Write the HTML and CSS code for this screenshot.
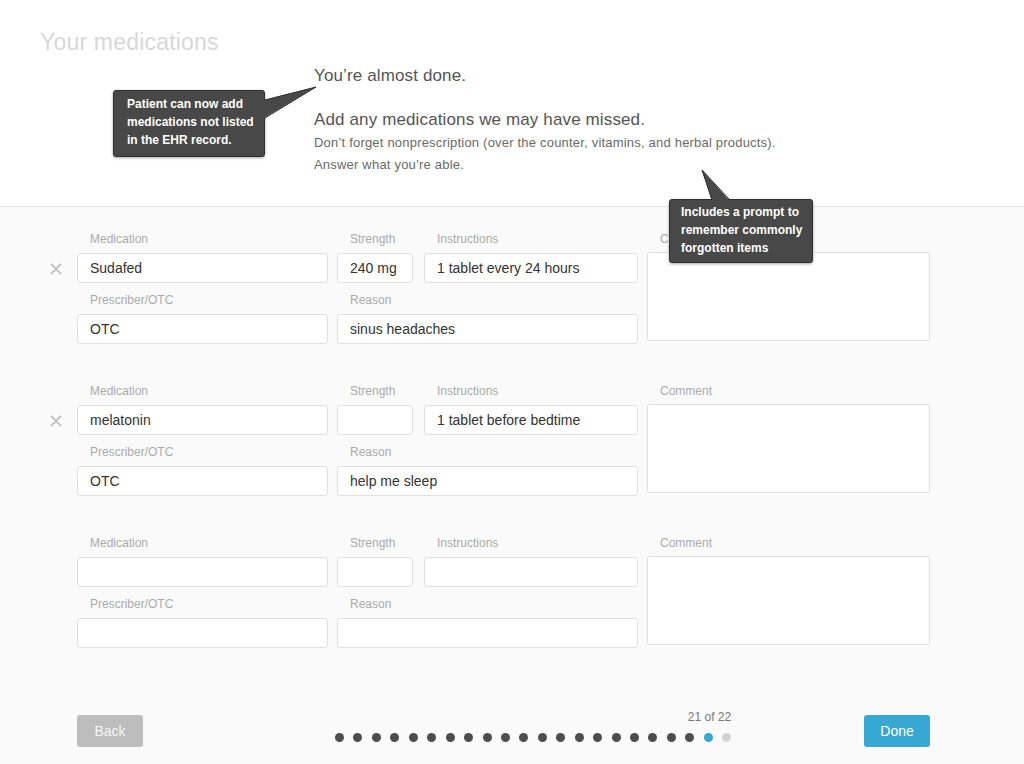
FILE: index.html
```html
<!DOCTYPE html>
<html lang="en">
<head>
  <meta charset="UTF-8" />
  <meta name="viewport" content="width=device-width, initial-scale=1.0" />
  <title>Your medications</title>
  <link rel="stylesheet" href="styles.css">
</head>
<body>
  <div class="page">

    <!-- Cabecera con título e introducción -->
    <header class="intro">
      <h1 class="title">Your medications</h1>
      <div class="intro-text">
        <p class="lead">You’re almost done.</p>
        <p class="lead lead-second">Add any medications we may have missed.</p>
        <p class="sub">Don’t forget nonprescription (over the counter, vitamins, and herbal products).</p>
        <p class="sub">Answer what you’re able.</p>
      </div>
    </header>

    <!-- Formulario de medicaciones -->
    <main class="meds">
      <div class="entry">
        <span class="remove">
          <svg width="12" height="12" viewBox="0 0 12 12"><path d="M1 1 L11 11 M11 1 L1 11" stroke="#c2c2c2" stroke-width="1.8" fill="none"/></svg>
        </span>
        <label class="lbl c-med r-1">Medication</label>
        <input class="field c-med r-2" type="text" value="Sudafed" />
        <label class="lbl c-str r-1">Strength</label>
        <input class="field field-str c-str r-2" type="text" value="240 mg" />
        <label class="lbl c-ins r-1">Instructions</label>
        <input class="field c-ins r-2" type="text" value="1 tablet every 24 hours" />
        <label class="lbl c-med r-3">Prescriber/OTC</label>
        <input class="field c-med r-4" type="text" value="OTC" />
        <label class="lbl c-rsn r-3">Reason</label>
        <input class="field c-rsn r-4" type="text" value="sinus headaches" />
        <div class="comment">
          <label class="lbl">Comment</label>
          <textarea class="note"></textarea>
        </div>
      </div>

      <div class="entry">
        <span class="remove">
          <svg width="12" height="12" viewBox="0 0 12 12"><path d="M1 1 L11 11 M11 1 L1 11" stroke="#c2c2c2" stroke-width="1.8" fill="none"/></svg>
        </span>
        <label class="lbl c-med r-1">Medication</label>
        <input class="field c-med r-2" type="text" value="melatonin" />
        <label class="lbl c-str r-1">Strength</label>
        <input class="field field-str c-str r-2" type="text" value="" />
        <label class="lbl c-ins r-1">Instructions</label>
        <input class="field c-ins r-2" type="text" value="1 tablet before bedtime" />
        <label class="lbl c-med r-3">Prescriber/OTC</label>
        <input class="field c-med r-4" type="text" value="OTC" />
        <label class="lbl c-rsn r-3">Reason</label>
        <input class="field c-rsn r-4" type="text" value="help me sleep" />
        <div class="comment">
          <label class="lbl">Comment</label>
          <textarea class="note"></textarea>
        </div>
      </div>

      <div class="entry">
        <label class="lbl c-med r-1">Medication</label>
        <input class="field c-med r-2" type="text" value="" />
        <label class="lbl c-str r-1">Strength</label>
        <input class="field field-str c-str r-2" type="text" value="" />
        <label class="lbl c-ins r-1">Instructions</label>
        <input class="field c-ins r-2" type="text" value="" />
        <label class="lbl c-med r-3">Prescriber/OTC</label>
        <input class="field c-med r-4" type="text" value="" />
        <label class="lbl c-rsn r-3">Reason</label>
        <input class="field c-rsn r-4" type="text" value="" />
        <div class="comment">
          <label class="lbl">Comment</label>
          <textarea class="note"></textarea>
        </div>
      </div>

      <!-- Pie con navegación y progreso -->
      <footer class="nav">
        <button class="btn btn-back">Back</button>
        <div class="pager">
          <div class="count">21 of 22</div>
          <div class="dots">
            <span class="dot"></span><span class="dot"></span><span class="dot"></span><span class="dot"></span>
            <span class="dot"></span><span class="dot"></span><span class="dot"></span><span class="dot"></span>
            <span class="dot"></span><span class="dot"></span><span class="dot"></span><span class="dot"></span>
            <span class="dot"></span><span class="dot"></span><span class="dot"></span><span class="dot"></span>
            <span class="dot"></span><span class="dot"></span><span class="dot"></span><span class="dot"></span>
            <span class="dot dot-current"></span><span class="dot dot-todo"></span>
          </div>
        </div>
        <button class="btn btn-done">Done</button>
      </footer>
    </main>

    <!-- Notas de anotación sobre la pantalla -->
    <div class="callout callout-one">
      Patient can now add<br>medications not listed<br>in the EHR record.
      <svg class="tail tail-one" width="52" height="34" viewBox="0 0 52 34">
        <polygon points="-1,14 51,1 -1,32" fill="#484848"/>
        <polyline points="0,14 51,1 0,32" fill="none" stroke="#2f2f2f" stroke-width="1"/>
      </svg>
    </div>
    <div class="callout callout-two">
      Includes a prompt to<br>remember commonly<br>forgotten items
      <svg class="tail tail-two" width="30" height="32" viewBox="0 0 30 32">
        <polygon points="11,32 1,1 29,32" fill="#484848"/>
        <polyline points="11,31 1,1 29,31" fill="none" stroke="#2f2f2f" stroke-width="1"/>
      </svg>
    </div>
  </div>
</body>
</html>
```

FILE: styles.css
```css
/* Reset básico */
*, *::before, *::after {
  box-sizing: border-box;
  margin: 0;
  padding: 0;
}

body {
  font-family: "Liberation Sans", Arial, sans-serif;
  background: #fafafa;
  color: #333;
}

.page {
  position: relative;
  display: flex;
  flex-direction: column;
  height: 764px;
  overflow: hidden;
}

/* Cabecera blanca */
.intro {
  background: #fff;
  border-bottom: 1px solid #e4e4e4;
  padding: 29px 40px 30px;
}
.title {
  font-size: 23px;
  line-height: 26px;
  font-weight: normal;
  letter-spacing: .2px;
  color: #d8d8d8;
}
.intro-text {
  margin: 10px 0 0 274px;
}
.lead {
  font-size: 17px;
  line-height: 22px;
  letter-spacing: .13px;
  color: #555;
}
.lead-second {
  margin-top: 22px;
  margin-bottom: 1px;
}
.sub {
  font-size: 13px;
  line-height: 22px;
  letter-spacing: .2px;
  color: #6a6a6a;
}

/* Zona del formulario */
.meds {
  flex: 1;
  display: flex;
  flex-direction: column;
  padding: 15px 0 17px 50px;
}

.entry {
  display: grid;
  grid-template-columns: 18px 251px 78px 214px 283px;
  grid-template-rows: auto 30px auto 30px;
  column-gap: 9px;
  margin-bottom: 30px;
}

.c-med { grid-column: 2; }
.c-str { grid-column: 3; }
.c-ins { grid-column: 4; }
.c-rsn { grid-column: 3 / 5; }
.r-1 { grid-row: 1; }
.r-2 { grid-row: 2; }
.r-3 { grid-row: 3; }
.r-4 { grid-row: 4; }

.remove {
  grid-column: 1;
  grid-row: 2;
  align-self: center;
  justify-self: start;
  display: flex;
  padding-top: 1px;
}

.lbl {
  display: block;
  font-size: 12px;
  line-height: 16px;
  color: #aaa;
  padding: 9px 0 6px 13px;
}

.field {
  width: 100%;
  height: 30px;
  border: 1px solid #e0e0e0;
  border-radius: 3px;
  background: #fff;
  font-family: inherit;
  font-size: 14px;
  color: #333;
  padding: 0 12px;
  outline: none;
}
.field-str {
  width: 76px;
}

.comment {
  grid-column: 5;
  grid-row: 1 / 5;
}
.note {
  display: block;
  width: 100%;
  height: 89px;
  margin-top: -1px;
  border: 1px solid #e0e0e0;
  border-radius: 2px;
  background: #fff;
  resize: none;
  outline: none;
}

/* Navegación inferior */
.nav {
  margin-top: auto;
  display: flex;
  align-items: flex-end;
  padding-left: 27px;
  width: 880px;
}
.btn {
  width: 66px;
  height: 32px;
  border: none;
  border-radius: 3px;
  font-family: inherit;
  font-size: 14px;
  color: #fff;
}
.btn-back {
  background: #bdbdbd;
  color: #f6f6f6;
}
.btn-done {
  margin-left: auto;
  background: #37a7d3;
}

.pager {
  margin-left: 192px;
  margin-bottom: 5px;
}
.count {
  text-align: right;
  font-size: 12px;
  line-height: 16px;
  color: #777;
}
.dots {
  display: flex;
  gap: 9.45px;
  margin-top: 8px;
}
.dot {
  width: 9px;
  height: 9px;
  border-radius: 50%;
  background: #4d4d4d;
}
.dot-current {
  background: #37a7d3;
}
.dot-todo {
  background: #d3d3d3;
}

/* Anotaciones */
.callout {
  position: absolute;
  background: #484848;
  border: 1px solid #2f2f2f;
  border-radius: 3px;
  box-shadow: 0 1px 3px rgba(0, 0, 0, .35);
  color: #fff;
  font-size: 12px;
  font-weight: bold;
  line-height: 18px;
}
.callout-one {
  left: 113px;
  top: 90px;
  width: 152px;
  height: 67px;
  padding: 4px 0 0 13px;
}
.callout-two {
  left: 669px;
  top: 199px;
  width: 144px;
  height: 64px;
  padding: 3px 0 0 11px;
}
.tail {
  position: absolute;
  overflow: visible;
}
.tail-one {
  left: 151px;
  top: -5px;
}
.tail-two {
  left: 31px;
  top: -31px;
}
```
